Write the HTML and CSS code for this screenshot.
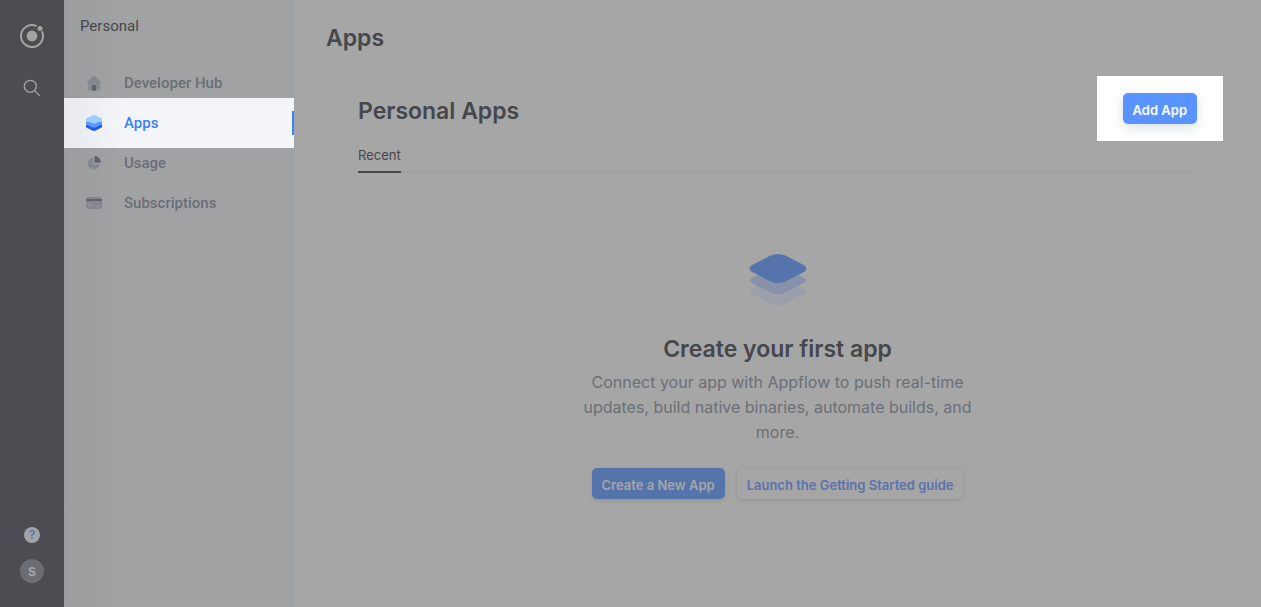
FILE: index.html
```html
<!DOCTYPE html>
<html lang="en">
<head>
<meta charset="utf-8">
<meta name="viewport" content="width=device-width, initial-scale=1">
<title>Apps</title>
<link rel="stylesheet" href="styles.css">
</head>
<body>
<div class="layout">
  <header class="rail">
    <a class="rail-link" href="#" aria-label="Home">
      <svg width="24" height="24" viewBox="0 0 24 24"><path d="M16.6 2.05A11 11 0 1 0 21.95 7.4" fill="none" stroke="#a2a3a3" stroke-width="2"/><circle cx="12" cy="12" r="5.4" fill="#a2a3a3"/><circle cx="20" cy="4.6" r="2.5" fill="#a2a3a3"/></svg>
    </a>
    <button class="rail-link search" type="button" aria-label="Search">
      <svg width="18" height="18" viewBox="0 0 18 18" fill="none" stroke="#a2a3a3" stroke-width="1.3"><circle cx="7.3" cy="7.3" r="6"/><path d="M11.6 11.6L16.8 16.8"/></svg>
    </button>
    <div class="rail-bottom">
      <button class="help" type="button">?</button>
      <button class="avatar" type="button">S</button>
    </div>
  </header>

  <aside class="sidebar">
    <div class="account">Personal</div>
    <nav class="nav">
      <a class="nav-item" href="#">
        <svg class="nav-icon" viewBox="0 0 16 16"><path d="M8 0.3L0 8H2.3V15.6H13.7V8H16Z" fill="#84898f"/><path d="M6 10H10V15.6H6Z" fill="#5c626b"/></svg>
        Developer Hub</a>
      <a class="nav-item active" href="#">
        <svg class="nav-icon" viewBox="0 0 16 16"><path d="M0 10H16V12.3Q12.5 14 9.8 15.5Q8 16.4 6.2 15.5Q3.5 14 0 12.3Z" fill="#1c5be0"/><path d="M0 6.5H16V9.4Q12.5 11 9.8 12.4Q8 13.2 6.2 12.4Q3.5 11 0 9.4Z" fill="#5b93ff"/><path d="M0 3.4Q3.5 2 6.2 .5Q8-.3 9.8 .5Q12.5 2 16 3.4V5.5Q12.5 7 9.8 8.3Q8 9.1 6.2 8.3Q3.5 7 0 5.5Z" fill="#9dcdfd"/></svg>
        Apps</a>
      <a class="nav-item" href="#">
        <svg class="nav-icon" viewBox="0 0 16 16"><path d="M7.3 2.6A6 6 0 1 0 13.6 9H7.3Z" fill="#84898f"/><path d="M8.4 1A6.6 6.6 0 0 1 15 7.7H8.4Z" fill="#5f636b"/></svg>
        Usage</a>
      <a class="nav-item" href="#">
        <svg class="nav-icon" viewBox="0 0 16 16"><rect y="2" width="16" height="12" rx="2" fill="#84878f"/><path d="M0 4H16V6H0Z" fill="#5f636b"/><path d="M2 8.5H5V11.5H2ZM10 11H14V12H10Z" fill="#8d9299"/></svg>
        Subscriptions</a>
    </nav>
  </aside>

  <main class="main">
    <h1 class="page-title">Apps</h1>
    <section class="content">
      <div class="content-head">
        <h2 class="heading">Personal Apps</h2>
        <div class="spotlight"><button class="btn btn-add" type="button">Add App</button></div>
      </div>
      <div class="tabs"><button class="tab" type="button">Recent</button></div>
      <div class="empty">
        <svg class="empty-icon" width="58" height="52" viewBox="0 0 58 52"><path d="M2.3 35.4L21.5 25.2Q29 21.8 36.5 25.2L55.7 35.4Q58.2 37.5 55.7 39.6L36.5 49.5Q29 53 21.5 49.5L2.3 39.6Q-.2 37.5 2.3 35.4Z" fill="#9b9fa9"/><path d="M2.3 24.4L21.5 14.2Q29 10.8 36.5 14.2L55.7 24.4Q58.2 26.5 55.7 28.6L36.5 38.5Q29 42 21.5 38.5L2.3 28.6Q-.2 26.5 2.3 24.4Z" fill="#8792aa"/><path d="M2.3 11.6L21.5 1.6Q29-1.6 36.5 1.6L55.7 11.6Q59 14.5 55.7 17.4L36.5 27.4Q29 30.6 21.5 27.4L2.3 17.4Q-1 14.5 2.3 11.6Z" fill="#5574ac"/></svg>
        <h2 class="heading empty-title">Create your first app</h2>
        <p class="empty-text">Connect your app with Appflow to push real-time updates, build native binaries, automate builds, and more.</p>
        <div class="actions">
          <button class="btn btn-create" type="button">Create a New App</button>
          <a class="btn btn-guide" href="#">Launch the Getting Started guide</a>
        </div>
      </div>
    </section>
  </main>
</div>
</body>
</html>
```
FILE: styles.css
```css
* { box-sizing: border-box; }
body { margin: 0; font-family: Inter, "Liberation Sans", sans-serif; background: #a6a6a6; color: #45474b; }
button { font: inherit; border: 0; cursor: pointer; }
a { text-decoration: none; }
h1, h2, p { margin: 0; }
svg { display: block; flex: none; }

.layout { display: flex; min-height: 100vh; }

.rail { width: 64px; flex: none; display: flex; flex-direction: column; align-items: center; padding: 24px 0; background: #4c4d52; }
.rail-link { padding: 0; background: none; }
.search { margin-top: 31px; }
.rail-bottom { margin-top: auto; display: flex; flex-direction: column; align-items: center; gap: 16px; }
.help, .avatar { display: grid; place-items: center; padding: 0; border-radius: 50%; }
.help { width: 16px; height: 16px; background: #a1a3a5; color: #5574b4; font-size: 12px; font-weight: 600; line-height: 16px; }
.avatar { width: 24px; height: 24px; background: #6b6e74; color: #a6a6a6; font-size: 12px; font-weight: 700; }

.sidebar { width: 230px; flex: none; background: linear-gradient(90deg, #9b9c9e 0, #a1a2a4 60px); }
.account { padding: 16px 16px 0; font-family: Roboto, sans-serif; font-size: 15px; line-height: 20px; }
.nav { padding-top: 27px; }
.nav-item { display: flex; align-items: center; gap: 22px; height: 40px; padding: 0 22px; color: #6b6e76; font-family: Roboto, sans-serif; font-size: 15px; font-weight: 500; }
.nav-icon { width: 16px; height: 16px; }
.active { position: relative; height: 50px; margin: -5px 0; color: #3880ff; background: linear-gradient(90deg, #e7e9ed 0, #f3f5f9 60px); }
.active::after { content: ""; position: absolute; right: 0; top: 13px; width: 2px; height: 24px; background: #3880ff; }

.main { flex: 1; min-width: 0; }
.page-title { padding: 22px 32px 0; font-size: 23px; font-weight: 600; line-height: 32px; }
.content { padding: 22px 64px 0; }
.content-head { display: flex; justify-content: space-between; align-items: flex-start; height: 65px; }
.heading { font-size: 23px; font-weight: 600; line-height: 32px; }
.content-head .heading { padding-top: 19px; }
.spotlight { padding: 17px 26px; margin-right: -26px; background: #fff; }
.btn { display: block; height: 31px; padding: 4px 10px 0; border-radius: 5px; font-size: 13px; font-weight: 600; line-height: 27px; white-space: nowrap; }
.btn-add { background: #5993ff; color: #fff; box-shadow: 0 4px 12px rgba(40, 60, 90, .16); }
.tabs { display: flex; border-bottom: 1px solid #9d9ea0; }
.tab { margin-bottom: -1px; padding: 5px 0 7px; height: 32px; border-bottom: 2px solid #45474b; background: none; color: #45474b; font-size: 13px; line-height: 18px; }
.empty { display: flex; flex-direction: column; align-items: center; padding-top: 81px; }
.empty-title { margin-top: 27px; }
.empty-text { width: 400px; max-width: 100%; margin-top: 5px; color: #6b6f76; text-align: center; font-size: 16px; line-height: 25px; }
.actions { display: flex; gap: 12px; margin-top: 23px; }
.btn-create { background: #5574ac; color: #a6a6a6; box-shadow: 0 2px 4px rgba(0, 0, 0, .1); }
.btn-guide { color: #5b73ae; box-shadow: 0 1px 4px rgba(0, 0, 0, .12); }
```
